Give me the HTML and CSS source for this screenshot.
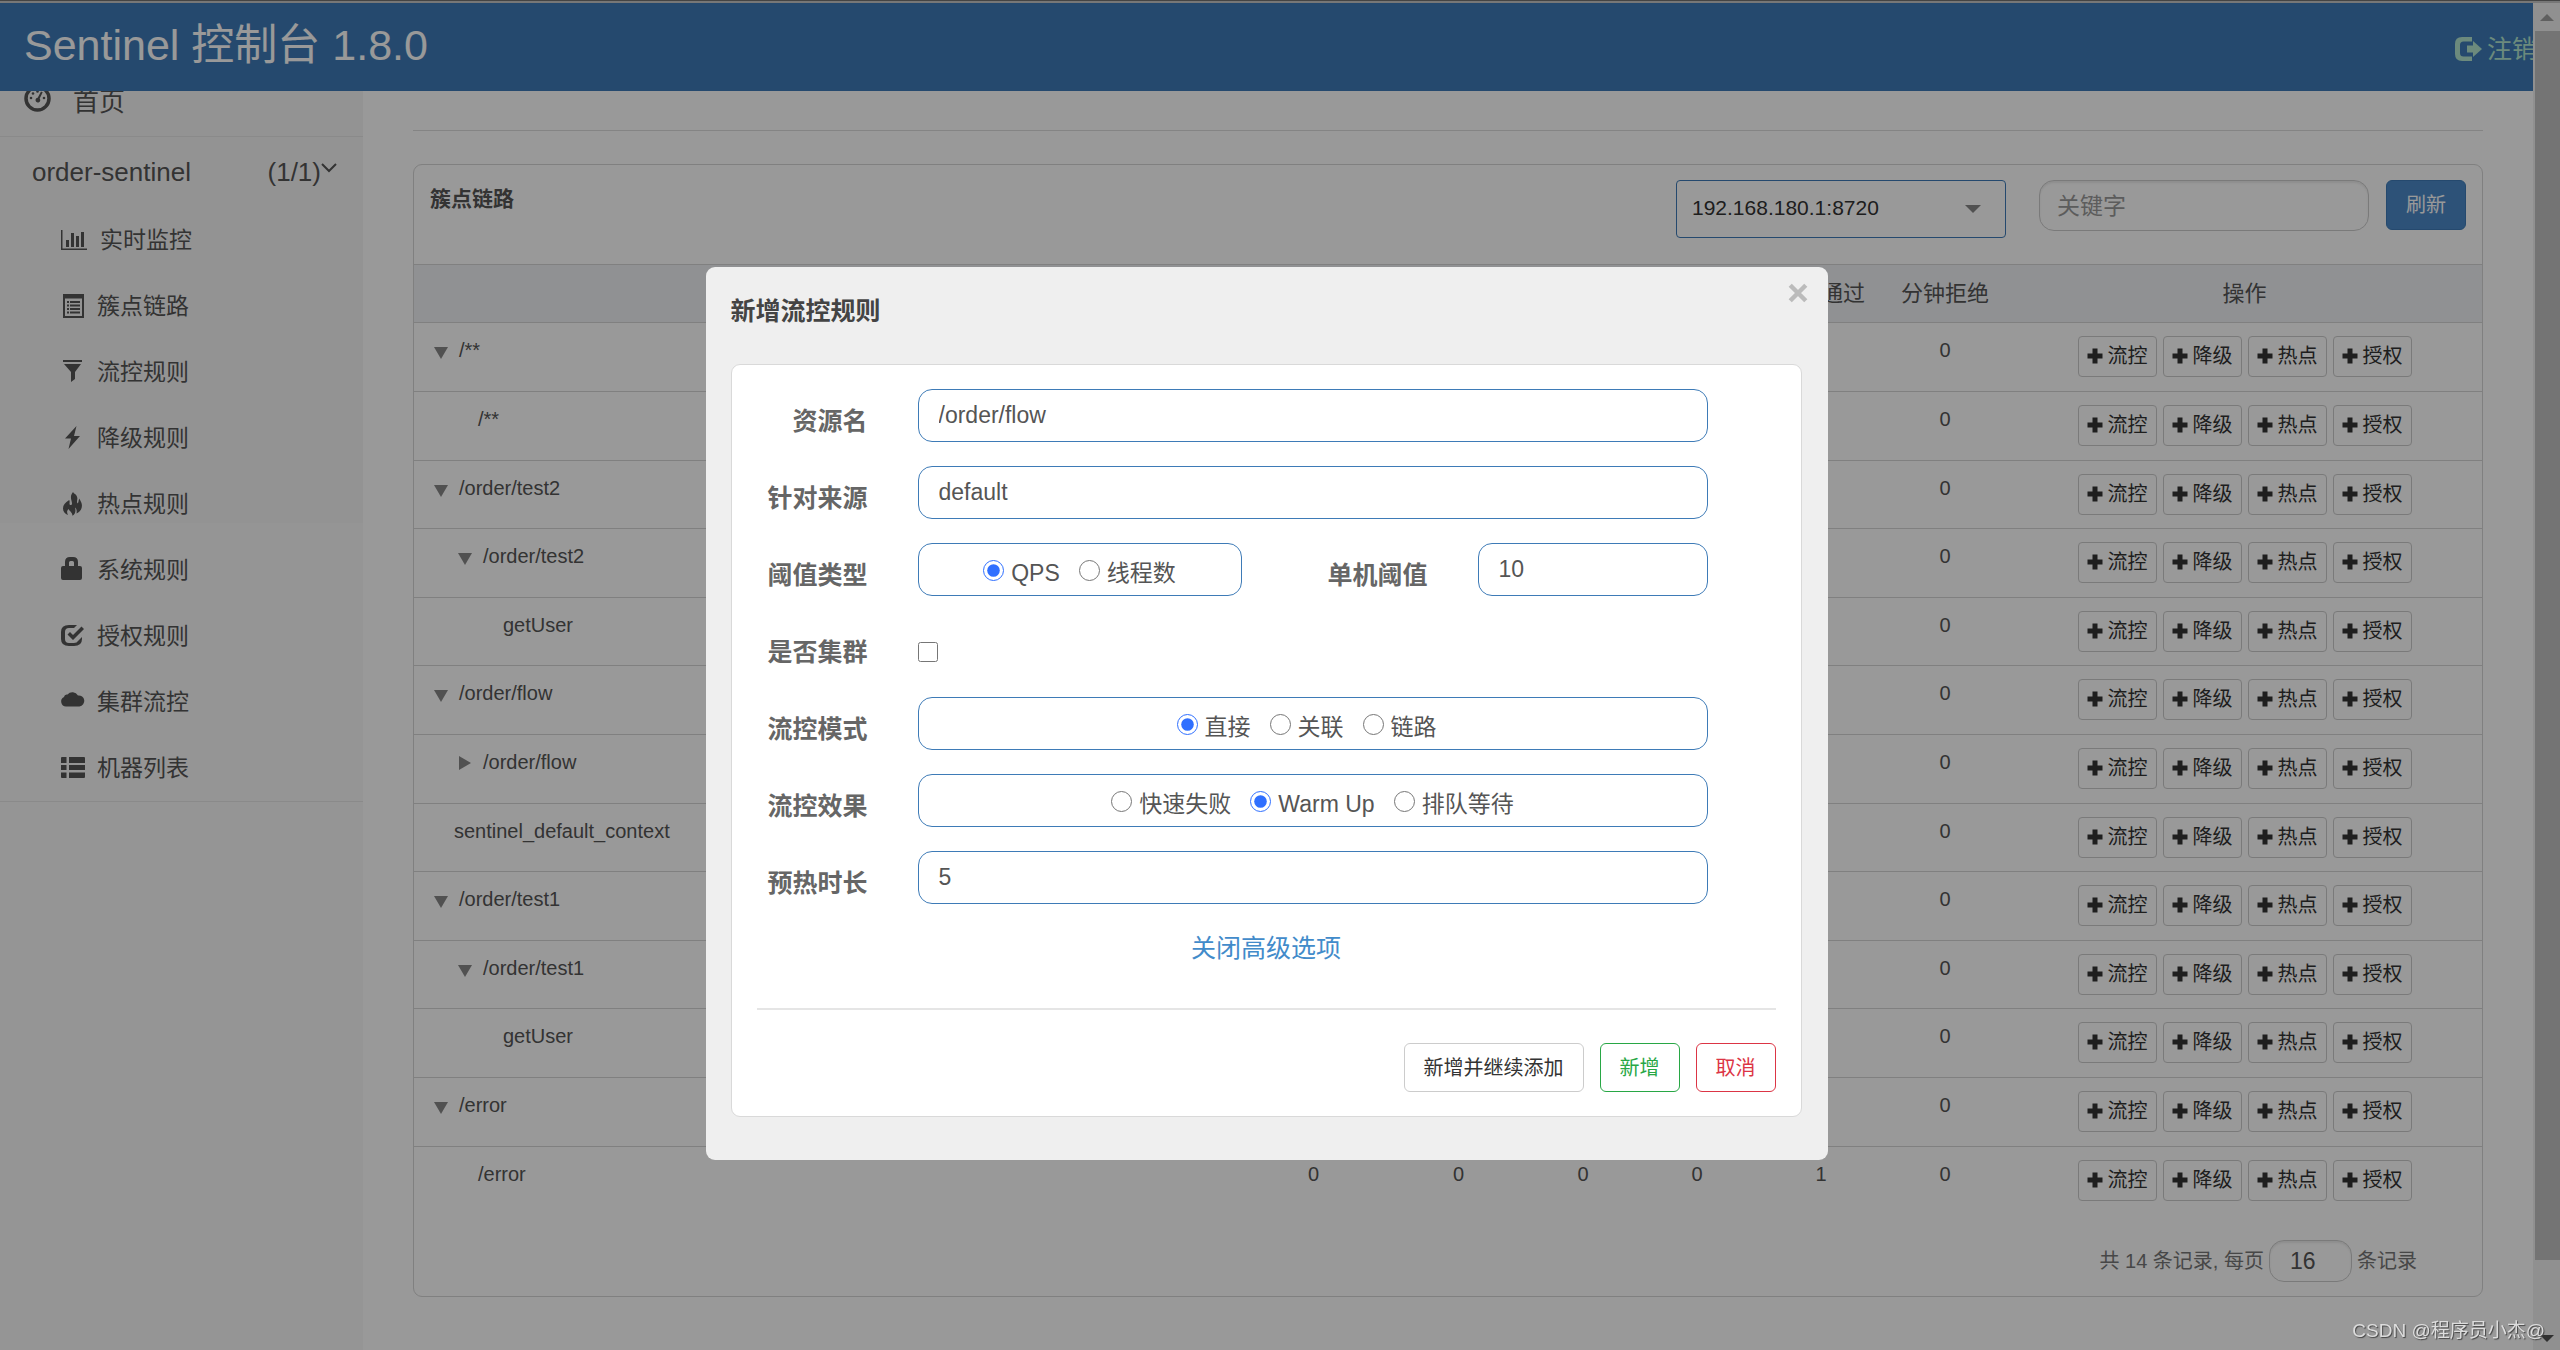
FILE: index.html
```html
<!DOCTYPE html>
<html lang="zh-CN">
<head>
  <meta charset="utf-8">
  <title>Sentinel 控制台</title>
  <link rel="stylesheet" href="styles.css">
</head>
<body>
  <svg class="sprite" aria-hidden="true">
    <symbol id="i-plus" viewBox="0 0 16 16"><path d="M5.5 0.5h5v5h5v5h-5v5h-5v-5h-5v-5h5z"/></symbol>
  </svg>

  <header class="topbar">
    <h1 class="brand">Sentinel 控制台 1.8.0</h1>
    <a class="logout" href="#">
      <svg class="logout-icon" viewBox="0 0 27 24"><path d="M17 0H7Q0 0 0 7v10q0 7 7 7h10v-4.500H8.500Q5 19.500 5 16V8q0-3.500 3.500-3.500H17z"/><path d="M12 8.500h6V4l9 8-9 8v-4.500h-6z"/></svg>
      <span>注销</span>
    </a>
  </header>

  <div class="layout">
    <nav class="sidebar">
      <a class="home" href="#">
        <svg class="gauge" viewBox="0 0 27 27"><circle cx="13.500" cy="13.500" r="11.500" fill="none" stroke="currentColor" stroke-width="3.500"/><circle cx="7" cy="13" r="1.300"/><circle cx="9" cy="8.500" r="1.300"/><circle cx="13.500" cy="6.500" r="1.300"/><circle cx="20" cy="13" r="1.300"/><path d="M17 6.500l1.700.8-3 6.200a2.400 2.400 0 1 1-2-.8z"/></svg>
        <span>首页</span>
      </a>
      <a class="app" href="#">
        <span>order-sentinel</span>
        <span class="app-count">(1/1)<svg class="chevron" viewBox="0 0 16 10"><path d="M1 1l7 7 7-7" fill="none" stroke="currentColor" stroke-width="2"/></svg></span>
      </a>
      <ul class="menu">
        <li><a href="#"><svg class="icon icon-wide" viewBox="0 0 27 24"><path d="M0 2h1.500v18.500H26V22H0zM5 12h3v7H5zM10 5h3v14h-3zM15 8h3v11h-3zM20 4h3v15h-3z"/></svg>实时监控</a></li>
        <li><a href="#"><svg class="icon" viewBox="0 0 24 24"><path fill-rule="evenodd" d="M2 0h21v24H2zM4 4.500V22h17V4.500z"/><path d="M6 7h2v2H6zM9 7h10v2H9zM6 10.500h2v2H6zM9 10.500h10v2H9zM6 14h2v2H6zM9 14h10v2H9zM6 17.500h2v2H6zM9 17.500h10v2H9z"/></svg>簇点链路</a></li>
        <li><a href="#"><svg class="icon" viewBox="0 0 24 24"><path d="M2 0h19v2H2zM3 4h17l-6 8v7l-4 3V12z"/></svg>流控规则</a></li>
        <li><a href="#"><svg class="icon" viewBox="0 0 24 24"><path d="M15.500 0L4 12.500h6L7.500 23 19 10h-6z"/></svg>降级规则</a></li>
        <li><a href="#"><svg class="icon" viewBox="0 0 24 24"><path d="M12 0C8 5 11 8 11 11.500c0 2-2.500 2-2.500.3 0-1.500.5-2.300-.3-3.800C4 11 2 13 2 16.500c0 3 2 5.500 5 6.500-1.500-2.500-1-4.500.5-6 1 2.500 3.500 2.500 4 6.800 3-1.800 3.500-4.800 2.500-8.300 1.500.8 2 3 1.500 6C19.500 19.500 22 16 20.500 11c-.6-2-1.800-3-2-4.500-1.500 2-.5 4-2 5-1.500-2.500 1-4-.8-7.500C15 2 13 2 12 0z"/></svg>热点规则</a></li>
        <li><a href="#"><svg class="icon" viewBox="0 0 24 24"><path fill-rule="evenodd" d="M4 8V4q0-5 5-5h3q5 0 5 5v4h2q2 0 2 2v10q0 2-2 2H2q-2 0-2-2V10q0-2 2-2zM8 8h5V4.500Q13 3 11.500 3h-2Q8 3 8 4.500z"/></svg>系统规则</a></li>
        <li><a href="#"><svg class="icon" viewBox="0 0 24 24"><path d="M16 1H8Q0 1 0 8v7q0 7 8 7h5q8 0 8-7v-2l-4 4q-1 2-4 2H8q-4 0-4-4V8q0-4 4-4h5z"/><path d="M6.500 10.500L9 8l3 3 8.500-8.500L23 5 12 16z"/></svg>授权规则</a></li>
        <li><a href="#"><svg class="icon" viewBox="0 0 24 24"><path d="M5 16.500a5 5 0 0 1-2-9.500 3 3 0 0 1 3.500-2.500A6.500 6.500 0 0 1 17 5.500a5.500 5.500 0 1 1 1.500 11z"/></svg>集群流控</a></li>
        <li><a href="#"><svg class="icon" viewBox="0 0 24 24"><path d="M1 1h4.500v6H0V2q0-1 1-1zM8 1h15q1 0 1 1v5H8zM0 9h5.500v5H0zM8 9h16v5H8zM0 16.500h5.500V22H1q-1 0-1-1zM8 16.500h16V21q0 1-1 1H8z"/></svg>机器列表</a></li>
      </ul>
    </nav>

    <main class="content">
      <hr class="rule">
      <section class="card">
        <div class="card-head">
          <h2 class="card-title">簇点链路</h2>
          <div class="machine">
            <select class="machine-select" aria-label="机器"><option>192.168.180.1:8720</option></select>
            <svg class="machine-arrow" viewBox="0 0 16 8"><path d="M0 0h16L8 8z"/></svg>
          </div>
          <input class="keyword" type="text" placeholder="关键字" aria-label="关键字">
          <button class="refresh" type="button">刷新</button>
        </div>
        <table class="resources">
          <thead>
            <tr><th class="c-name"></th><th class="c-pass">通过QPS</th><th class="c-block">拒绝QPS</th><th class="c-thread">线程数</th><th class="c-num">平均RT</th><th class="c-num">分钟通过</th><th class="c-num">分钟拒绝</th><th class="c-ops">操作</th></tr>
          </thead>
          <tbody id="rows"></tbody>
        </table>
        <div class="pager">
          <label for="page-size">共 14 条记录, 每页</label>
          <input class="page-size" id="page-size" type="text" value="16">
          <span>条记录</span>
        </div>
      </section>
    </main>
  </div>

  <div class="scrollbar" aria-hidden="true">
    <svg class="scroll-arrow" viewBox="0 0 14 7"><path fill="#a0a0a0" d="M7 0l7 7H0z"/></svg>
    <div class="scroll-thumb"></div>
    <svg class="scroll-arrow" viewBox="0 0 14 7"><path fill="#505050" d="M0 0h14L7 7z"/></svg>
  </div>

  <div class="overlay">
    <div class="dialog" role="dialog" aria-labelledby="dialog-title">
      <div class="dialog-head">
        <h2 class="dialog-title" id="dialog-title">新增流控规则</h2>
        <button class="close" type="button" aria-label="关闭"><svg class="close-icon" viewBox="0 0 18 18"><path d="M2 2l14 14M16 2L2 16" fill="none" stroke="currentColor" stroke-width="4"/></svg></button>
      </div>
      <form class="panel">
        <div class="fields">
          <label class="label" for="resource">资源名</label>
          <input class="text" id="resource" type="text" value="/order/flow">

          <label class="label" for="origin">针对来源</label>
          <input class="text" id="origin" type="text" value="default">

          <span class="label" id="l-grade">阈值类型</span>
          <div class="split">
            <div class="radios" role="radiogroup" aria-labelledby="l-grade">
              <label class="option"><input type="radio" name="grade" checked><span>QPS</span></label>
              <label class="option"><input type="radio" name="grade"><span>线程数</span></label>
            </div>
            <label class="label" for="threshold">单机阈值</label>
            <input class="text" id="threshold" type="text" value="10">
          </div>

          <label class="label" for="cluster">是否集群</label>
          <input class="check" id="cluster" type="checkbox">

          <span class="label" id="l-mode">流控模式</span>
          <div class="radios radios-mode" role="radiogroup" aria-labelledby="l-mode">
            <label class="option"><input type="radio" name="mode" checked><span>直接</span></label>
            <label class="option"><input type="radio" name="mode"><span>关联</span></label>
            <label class="option"><input type="radio" name="mode"><span>链路</span></label>
          </div>

          <span class="label" id="l-effect">流控效果</span>
          <div class="radios" role="radiogroup" aria-labelledby="l-effect">
            <label class="option"><input type="radio" name="effect"><span>快速失败</span></label>
            <label class="option"><input type="radio" name="effect" checked><span>Warm Up</span></label>
            <label class="option"><input type="radio" name="effect"><span>排队等待</span></label>
          </div>

          <label class="label" for="warmup">预热时长</label>
          <input class="text" id="warmup" type="text" value="5">
        </div>
        <a class="advanced" href="#">关闭高级选项</a>
        <hr class="divider">
        <div class="actions">
          <button class="btn" type="button">新增并继续添加</button>
          <button class="btn btn-success" type="button">新增</button>
          <button class="btn btn-danger" type="button">取消</button>
        </div>
      </form>
    </div>
  </div>

  <div class="watermark">CSDN @程序员小杰@</div>
  <div class="window-edge" aria-hidden="true"></div>
  <script src="app.js"></script>
</body>
</html>
```

FILE: app.js
```js
// Resource tree: [name, depth, state], state is "open", "closed" or "leaf".
const resources = [
  ["/**", 0, "open"],
  ["/**", 1, "leaf"],
  ["/order/test2", 0, "open"],
  ["/order/test2", 1, "open"],
  ["getUser", 2, "leaf"],
  ["/order/flow", 0, "open"],
  ["/order/flow", 1, "closed"],
  ["sentinel_default_context", 0, "leaf"],
  ["/order/test1", 0, "open"],
  ["/order/test1", 1, "open"],
  ["getUser", 2, "leaf"],
  ["/error", 0, "open"],
  ["/error", 1, "leaf"]
];
const arrows = {
  open: '<svg class="arrow" viewBox="0 0 14 12"><path d="M0 0h14L7 12z"/></svg>',
  closed: '<svg class="arrow" viewBox="0 0 14 12"><path d="M1 -3l12 7-12 7z"/></svg>',
  leaf: ""
};
const ops = ["流控", "降级", "热点", "授权"]
  .map(t => `<button class="op" type="button"><svg class="plus"><use href="#i-plus"/></svg>${t}</button>`)
  .join("");

document.getElementById("rows").innerHTML = resources.map(([name, depth, state], i) => {
  const passed = i === resources.length - 1 ? 1 : 0;
  const nums = [0, 0, 0, 0, passed, 0].map(n => `<td class="num">${n}</td>`).join("");
  return `<tr><td class="name"><span class="node depth-${depth} ${state}">${arrows[state]}${name}</span></td>${nums}<td><div class="ops">${ops}</div></td></tr>`;
}).join("");
```

FILE: styles.css
```css
* { box-sizing: border-box; }

body {
  margin: 0;
  background: #fff;
  color: #555;
  font: 20px/28px "Liberation Sans", "Noto Sans CJK SC", sans-serif;
}

input, button, select { font: inherit; color: inherit; }
a { color: inherit; text-decoration: none; }
svg { fill: currentColor; overflow: visible; flex: none; }
h1, h2 { margin: 0; }
.sprite { display: none; }

/* Top bar */
.topbar {
  position: fixed;
  inset: 3px 0 auto 0;
  z-index: 1;
  height: 88px;
  display: flex;
  justify-content: space-between;
  align-items: center;
  padding: 0 23px 0 24px;
  background: #3e7bb7;
}
.brand { color: #fff; font-size: 43px; line-height: 60px; font-weight: 400; padding-bottom: 4px; }
.logout { display: flex; align-items: center; gap: 5px; padding-top: 3px; color: #b4e6d0; font-size: 25px; line-height: 36px; }
.logout-icon { width: 27px; height: 24px; }
.window-edge {
  position: fixed;
  inset: 0 0 auto 0;
  z-index: 5;
  height: 3px;
  background: #777;
  border-top: 1px solid #444;
}

/* Sidebar */
.layout { display: flex; min-height: 100vh; padding-right: 27px; }
.sidebar {
  flex: 0 0 363px;
  padding-top: 67px;
  background: linear-gradient(#f6f6f6 523px, #f9f9f9 523px);
  color: #555;
}
.home {
  display: flex;
  align-items: center;
  gap: 22px;
  height: 70px;
  padding-left: 24px;
  font-size: 26px;
  border-bottom: 1px solid #e7e7e7;
}
.gauge { width: 27px; height: 27px; margin-bottom: 6px; }
.app {
  display: flex;
  justify-content: space-between;
  height: 70px;
  padding: 0 26px 0 32px;
  font-size: 26px;
  line-height: 70px;
}
.app-count { display: flex; align-items: center; }
.chevron { width: 16px; height: 10px; margin-bottom: 8px; }
.menu { margin: 0; padding: 0; list-style: none; border-bottom: 1px solid #e7e7e7; }
.menu a {
  display: flex;
  align-items: center;
  gap: 12px;
  height: 66px;
  padding-left: 61px;
  font-size: 23px;
}
.icon { width: 24px; height: 24px; }
.icon-wide { width: 27px; }

/* Content */
.content { flex: 1; padding: 130px 50px 52px; }
.rule { margin: 0 0 33px; border: 0; border-top: 1px solid #ddd; }
.card { border: 1px solid #d5d5d5; border-radius: 9px; }
.card-head { display: flex; align-items: flex-start; gap: 17px; padding: 15px 16px 26px; }
.card-title { flex: 1; font-size: 21px; line-height: 38px; }
.machine { display: grid; width: 330px; margin-right: 16px; align-items: center; }
.machine-select, .machine-arrow { grid-area: 1 / 1; }
.machine-select {
  height: 58px;
  padding: 0 15px 2px;
  appearance: none;
  border: 1px solid #3e7bb7;
  border-radius: 4px;
  background: #fff;
  color: #333;
  font-size: 21px;
}
.machine-arrow { width: 16px; height: 8px; justify-self: end; margin-right: 25px; pointer-events: none; color: #888; }
.keyword {
  width: 330px;
  height: 51px;
  padding: 2px 17px 0;
  border: 1px solid #ccc;
  border-radius: 15px;
  background: #fff;
  box-shadow: inset 0 2px 2px rgba(0, 0, 0, .08);
  font-size: 23px;
}
.keyword::placeholder { color: #999; }
.refresh {
  height: 50px;
  padding: 0 19px;
  border: 1px solid #3e7bb7;
  border-radius: 6px;
  background: #4b89c9;
  color: #fff;
}

.resources { width: 100%; table-layout: fixed; border-collapse: separate; border-spacing: 0; }
.resources th {
  height: 58px;
  padding: 0;
  border-top: 1px solid #d5d5d5;
  background: #f0f2f5;
  font-size: 22px;
  font-weight: 400;
}
.c-pass, .c-block { width: 145px; }
.c-thread { width: 104px; }
.c-num { width: 124px; }
.c-ops { width: 475px; }
.resources td {
  height: 69px;
  padding: 13px 0;
  border-top: 1px solid #d5d5d5;
  vertical-align: top;
}
.resources tr:nth-child(5n + 3) td, .resources tr:nth-child(5n) td { height: 68px; }
.num { text-align: center; }
.node { display: flex; align-items: center; gap: 11px; }
.depth-0 { padding-left: 20px; }
.depth-1 { padding-left: 44px; }
.depth-2 { padding-left: 69px; }
.node.leaf { text-indent: 20px; }
.arrow { width: 14px; height: 12px; margin-top: 6px; color: #888; }
.ops { display: flex; justify-content: center; gap: 6px; }
.op {
  display: flex;
  align-items: center;
  gap: 5px;
  height: 41px;
  padding: 0 8px 2px;
  border: 1px solid #ccc;
  border-radius: 4px;
  background: #fff;
  color: #333;
}
.plus { width: 16px; height: 16px; }

.pager {
  display: flex;
  justify-content: flex-end;
  align-items: center;
  gap: 5px;
  padding: 26px 65px 14px;
  color: #777;
}
.page-size {
  width: 83px;
  height: 42px;
  padding: 0 20px;
  border: 1px solid #ccc;
  border-radius: 15px;
  background: #fff;
  box-shadow: inset 0 2px 2px rgba(0, 0, 0, .08);
  color: #555;
  font-size: 23px;
}

/* Scroll bar */
.scrollbar {
  position: fixed;
  inset: 3px 0 0 auto;
  z-index: 2;
  width: 27px;
  display: flex;
  flex-direction: column;
  align-items: center;
  padding: 11px 0 8px;
  background: #f0f0f0;
}
.scroll-arrow { width: 14px; height: 7px; }
.scroll-thumb { flex: 1; align-self: stretch; margin: 10px 0 75px 2px; background: #c1c1c1; }

/* Dialog */
.overlay {
  position: fixed;
  inset: 0;
  z-index: 3;
  display: flex;
  justify-content: center;
  align-items: flex-start;
  padding: 267px 27px 0 0;
  background: rgba(0, 0, 0, .4);
}
.dialog { width: 1122px; max-width: 100%; padding-bottom: 43px; border-radius: 9px; background: #efefef; }
.dialog-head {
  display: flex;
  justify-content: space-between;
  align-items: flex-start;
  padding: 10px 14px 34px 25px;
}
.dialog-title { padding-top: 15px; font-size: 25px; line-height: 38px; color: #444; }
.close {
  display: grid;
  place-items: center;
  width: 32px;
  height: 32px;
  padding: 0;
  border: 0;
  background: none;
  color: #bbb;
}
.close-icon { width: 20px; height: 20px; }
.panel {
  margin: 0 26px 0 25px;
  padding: 24px 25px;
  border: 1px solid #d9d9d9;
  border-radius: 9px;
  background: #fff;
}
.fields {
  display: grid;
  grid-template-columns: 111px 1fr;
  grid-auto-rows: 53px;
  gap: 24px 50px;
  padding-right: 68px;
}
.split { display: grid; grid-template-columns: 324px 1fr 230px; column-gap: 50px; }
.label {
  padding-top: 13px;
  font-size: 25px;
  line-height: 38px;
  font-weight: 700;
  text-align: right;
  color: #666;
}
.text, .radios {
  width: 100%;
  height: 53px;
  border: 1px solid #3e7bb7;
  border-radius: 14px;
  background: #fff;
  font-size: 23px;
}
.text { padding: 0 20px; }
.radios { display: flex; justify-content: center; align-items: center; gap: 19px; padding-top: 2px; }
.radios-mode { padding-right: 12px; }
.option { display: flex; align-items: center; gap: 7px; }
.option input { width: 21px; height: 21px; }
.check { width: 20px; height: 20px; }
.option input, .check { margin: 0; accent-color: #2f6fff; }
.option span { padding-top: 4px; }
.check { align-self: end; margin-bottom: 11px; }
.advanced {
  display: block;
  margin-top: 25px;
  font-size: 25px;
  line-height: 38px;
  text-align: center;
  color: #428bca;
}
.divider { margin: 41px 0 33px; border: 0; border-top: 2px solid #e5e5e5; }
.actions { display: flex; justify-content: flex-end; gap: 16px; }
.btn {
  height: 49px;
  padding: 0 19px;
  border: 1px solid #ccc;
  border-radius: 6px;
  background: #fff;
  color: #333;
}
.btn-success { border-color: #28a745; color: #28a745; }
.btn-danger { border-color: #dc3545; color: #dc3545; }

.watermark {
  position: fixed;
  right: 15px;
  bottom: 5px;
  z-index: 4;
  font-size: 19px;
  color: #ddd;
  text-shadow: 1px 1px 1px #444;
}
```
